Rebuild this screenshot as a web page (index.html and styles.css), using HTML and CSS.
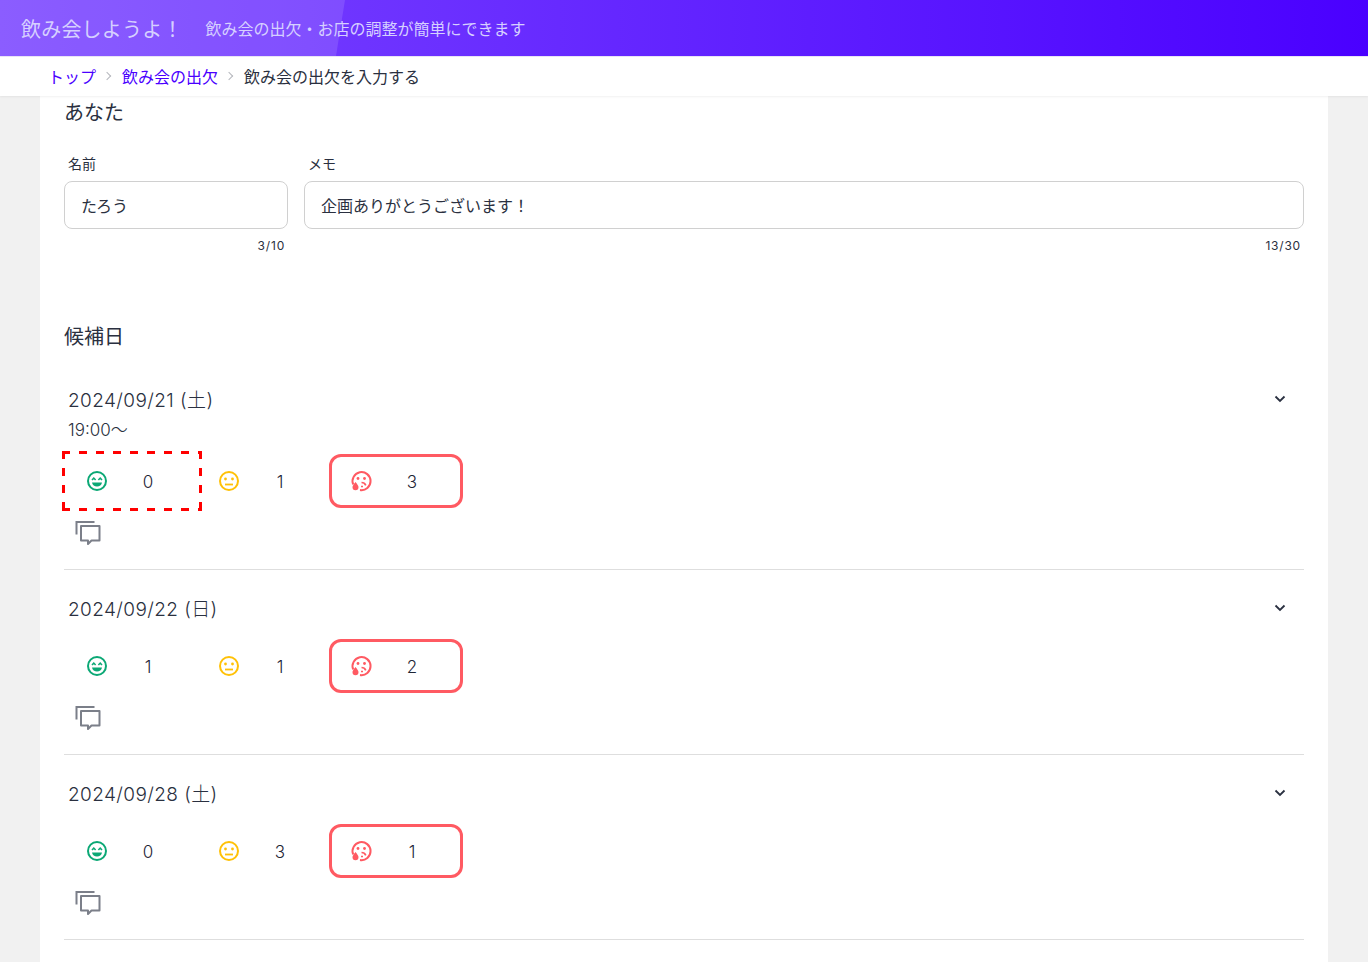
FILE: index.html
```html
<!DOCTYPE html>
<html lang="ja">
<head>
<meta charset="utf-8">
<title>飲み会しようよ！</title>
<link rel="stylesheet" href="styles.css">
</head>
<body>
<svg class="defs" width="0" height="0" aria-hidden="true">
  <symbol id="good" viewBox="0 0 24 24"><circle cx="12" cy="12" r="9" fill="none" stroke="currentColor" stroke-width="2"/><path d="M7 11l1.800-2 1.800 2M13.400 11l1.800-2 1.800 2" fill="none" stroke="currentColor" stroke-width="1.500"/><path d="M7 13.500h10c-.4 2.500-2.500 4-5 4s-4.600-1.500-5-4z" fill="currentColor"/></symbol>
  <symbol id="meh" viewBox="0 0 24 24"><circle cx="12" cy="12" r="9" fill="none" stroke="currentColor" stroke-width="2"/><circle cx="8.500" cy="10" r="1.400" fill="currentColor"/><circle cx="15.500" cy="10" r="1.400" fill="currentColor"/><path d="M8 15.500h8" stroke="currentColor" stroke-width="1.800"/></symbol>
  <symbol id="bad" viewBox="0 0 24 24"><path d="M4.200 15.500A9 9 0 1 1 11 21" fill="none" stroke="currentColor" stroke-width="2"/><circle cx="9" cy="9.500" r="1.400" fill="currentColor"/><circle cx="15.500" cy="9.500" r="1.400" fill="currentColor"/><path d="M12.500 13.500c2 0 3.500 1 4.300 2.800M12 17.500h2" fill="none" stroke="currentColor" stroke-width="1.700"/><path d="M6.500 13c1.800 2.400 3 3.700 3 5.200a3 3 0 0 1-6 0c0-1.500 1.200-2.800 3-5.200z" fill="currentColor"/></symbol>
  <symbol id="chat" viewBox="0 0 26 26"><path d="M1.500 14.500V2h18" fill="none" stroke="currentColor" stroke-width="2"/><path d="M6 6h18.500v14.500h-8l-3.500 3.500v-3.500H6z" fill="none" stroke="currentColor" stroke-width="2" stroke-linejoin="round"/></symbol>
  <symbol id="chev" viewBox="0 0 12 8"><path d="M1.500 1.500L6 6l4.500-4.500" fill="none" stroke="currentColor" stroke-width="1.800"/></symbol>
</svg>

<header class="topbar">
  <span class="brand">飲み会しようよ！</span>
  <span class="tagline">飲み会の出欠・お店の調整が簡単にできます</span>
</header>
<nav class="crumbs">
  <a class="crumb-link" href="#">トップ</a><span class="crumb-sep"></span>
  <a class="crumb-link" href="#">飲み会の出欠</a><span class="crumb-sep"></span>
  <span class="crumb-current">飲み会の出欠を入力する</span>
</nav>

<main class="card">
  <h2 class="you-title">あなた</h2>
  <div class="fields">
    <div class="field field-name">
      <label class="field-label">名前</label>
      <div class="input">たろう</div>
      <div class="count">3/10</div>
    </div>
    <div class="field field-memo">
      <label class="field-label">メモ</label>
      <div class="input">企画ありがとうございます！</div>
      <div class="count">13/30</div>
    </div>
  </div>

  <h2 class="dates-title">候補日</h2>

  <section class="date first">
    <div class="date-head"><span class="date-text">2024/09/21 (土)</span><svg class="chev"><use href="#chev"/></svg></div>
    <div class="time">19:00～</div>
    <div class="votes">
      <div class="vote selected"><svg class="face good"><use href="#good"/></svg><span class="num">0</span></div>
      <div class="vote"><svg class="face meh"><use href="#meh"/></svg><span class="num">1</span></div>
      <div class="vote alert"><svg class="face bad"><use href="#bad"/></svg><span class="num">3</span></div>
    </div>
    <svg class="chat"><use href="#chat"/></svg>
  </section>

  <section class="date">
    <div class="date-head"><span class="date-text">2024/09/22 (日)</span><svg class="chev"><use href="#chev"/></svg></div>
    <div class="votes">
      <div class="vote"><svg class="face good"><use href="#good"/></svg><span class="num">1</span></div>
      <div class="vote"><svg class="face meh"><use href="#meh"/></svg><span class="num">1</span></div>
      <div class="vote alert"><svg class="face bad"><use href="#bad"/></svg><span class="num">2</span></div>
    </div>
    <svg class="chat"><use href="#chat"/></svg>
  </section>

  <section class="date">
    <div class="date-head"><span class="date-text">2024/09/28 (土)</span><svg class="chev"><use href="#chev"/></svg></div>
    <div class="votes">
      <div class="vote"><svg class="face good"><use href="#good"/></svg><span class="num">0</span></div>
      <div class="vote"><svg class="face meh"><use href="#meh"/></svg><span class="num">3</span></div>
      <div class="vote alert"><svg class="face bad"><use href="#bad"/></svg><span class="num">1</span></div>
    </div>
    <svg class="chat"><use href="#chat"/></svg>
  </section>
</main>
</body>
</html>
```
FILE: styles.css
```css
* { box-sizing: border-box; }
html, body { margin: 0; height: 962px; overflow: hidden; }
body {
  background: #f1f1f1;
  color: #2a3040;
  font-family: Inter, "Noto Sans CJK JP", sans-serif;
  font-size: 16px;
}
.defs { position: absolute; }
.topbar {
  position: relative;
  height: 57px;
  padding: 0 21px;
  display: flex;
  align-items: center;
  gap: 23px;
  color: #d6d0ff;
  background: linear-gradient(90deg, #7b47ff 0%, #4a00ff 100%);
  border-bottom: 1px solid #e9e4f7;
  overflow: hidden;
}
.topbar::before {
  content: "";
  position: absolute;
  left: 0; top: 0; bottom: 0;
  width: 345px;
  background: rgba(255, 255, 255, .12);
  clip-path: polygon(0 0, 100% 0, 97.400% 100%, 0 100%);
}
.brand { position: relative; font-size: 20px; letter-spacing: .2px; }
.tagline { position: relative; font-size: 16px; }
.crumbs {
  height: 39px;
  padding: 0 48px 2px;
  display: flex;
  align-items: center;
  background: #fff;
  font-size: 16px;
  box-shadow: 0 1px 2px rgba(0,0,0,.06);
  position: relative;
  z-index: 1;
}
.crumb-link { color: #4a00ff; text-decoration: none; }
.crumb-current { color: #2a3040; }
.crumb-sep {
  width: 6px; height: 6px;
  margin: 0 12px 0 8px;
  border-top: 1px solid #b5b7bd;
  border-right: 1px solid #b5b7bd;
  transform: rotate(45deg);
}
.card {
  margin: 0 40px;
  padding: 0 24px;
  height: 900px;
  background: #fff;
}
.you-title, .dates-title { margin: 0; font-weight: 400; font-size: 20px; line-height: 30px; }
.you-title { padding-top: 2px; }
.fields { display: flex; gap: 16px; margin-top: 26px; }
.field-name { width: 224px; }
.field-memo { flex: 1; }
.field-label { display: block; padding-left: 4px; font-size: 14px; line-height: 20px; }
.input {
  height: 48px;
  margin-top: 7px;
  padding: 0 16px;
  display: flex;
  align-items: center;
  border: 1px solid #d0d0d0;
  border-radius: 8px;
  font-size: 16px;
}
.count { padding: 9px 3px 0; text-align: right; font-size: 12px; line-height: 16px; letter-spacing: .8px; }
.dates-title { margin-top: 68px; }
.date { height: 185px; padding-top: 21px; border-bottom: 1px solid #dedede; }
.date.first { height: 209px; margin-top: 9px; }
.date-head { display: flex; justify-content: space-between; align-items: center; height: 34px; padding: 0 18px 0 4px; }
.date-text { margin-bottom: 2px; font-size: 19px; font-weight: 300; letter-spacing: .4px; }
.chev { width: 12px; height: 8px; color: #2a3040; }
.time { padding-left: 4px; margin: 1px 0 11px; font-size: 17px; font-weight: 300; line-height: 26px; }
.votes { display: flex; height: 54px; }
.date:not(.first) .votes { margin-top: 14px; }
.vote { position: relative; width: 132px; height: 54px; display: flex; align-items: center; padding-left: 21px; }
.vote.alert { flex: none; width: 134px; margin-left: 1px; margin-right: -3px; padding-left: 17px; border: 3px solid #ff5a62; border-radius: 12px; }
.vote.selected::after {
  content: "";
  position: absolute;
  left: -2px; right: -6px; top: -3px; bottom: -3px;
  background:
    repeating-linear-gradient(90deg, #f00 0 8px, transparent 8px 17px) left top / 100% 3px no-repeat,
    repeating-linear-gradient(90deg, #f00 0 8px, transparent 8px 17px) left bottom / 100% 3px no-repeat,
    repeating-linear-gradient(180deg, #f00 0 8px, transparent 8px 17px) left top / 3px 100% no-repeat,
    repeating-linear-gradient(180deg, #f00 0 8px, transparent 8px 17px) right top / 3px 100% no-repeat;
}
.face { width: 24px; height: 24px; flex: none; }
.good { color: #0ba875; }
.meh { color: #ffc107; }
.bad { color: #ff5a62; }
.num { width: 58px; margin-left: 10px; padding-top: 2px; text-align: center; font-size: 17px; font-weight: 300; color: #1f2636; }
.chat { display: block; width: 26px; height: 26px; margin: 12px 0 0 11px; color: #7b7f89; }
```
